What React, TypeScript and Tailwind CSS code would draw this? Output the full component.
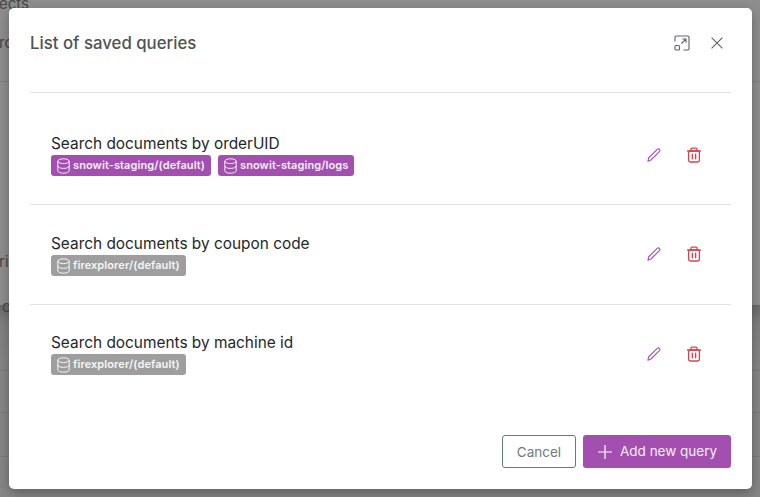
import React from "react";

function Db() {
  return (
    <svg viewBox="0 0 13 16" width="13" height="16" fill="none" stroke="currentColor" strokeWidth="1">
      <ellipse cx="6.5" cy="3.2" rx="5.7" ry="2.4" />
      <path d="M.8 3.2v9.6c0 1.3 2.6 2.4 5.7 2.4s5.7-1.1 5.7-2.4V3.2" />
      <path d="M.8 8c0 1.3 2.6 2.4 5.7 2.4s5.7-1.1 5.7-2.4" />
    </svg>
  );
}

function Pencil() {
  return (
    <svg viewBox="0 0 16 16" width="16" height="16" fill="none" stroke="#a855b8" strokeWidth="1.2" strokeLinejoin="round">
      <path d="M2 14.2l.7-3.4 8.5-8.4c.7-.7 1.7-.7 2.3-.1.6.6.6 1.6-.1 2.3l-8.5 8.4-2.9 1.2z" />
    </svg>
  );
}

function Trash() {
  return (
    <svg viewBox="0 0 16 16" width="16" height="16" fill="none" stroke="#d9434e" strokeWidth="1.3" strokeLinejoin="round" strokeLinecap="round">
      <path d="M1.5 4h13" />
      <path d="M5 4V2.2c0-.6.4-1 1-1h4c.6 0 1 .4 1 1V4" />
      <rect x="2.6" y="4" width="10.8" height="11" rx="1.8" />
      <path d="M6.4 7.2v4.6M9.6 7.2v4.6" strokeWidth="1.4" />
    </svg>
  );
}

function Expand() {
  return (
    <svg viewBox="0 0 16 16" width="16" height="16" fill="none" stroke="#5b6266" strokeWidth="1.1">
      <path d="M1 6.5V2.2C1 1.5 1.5 1 2.2 1h11.6c.7 0 1.2.5 1.2 1.2v11.6c0 .7-.5 1.2-1.2 1.2H9.5" />
      <rect x="1" y="10.5" width="4.5" height="4.5" rx="1" />
      <path d="M7.5 8.5L11.8 4.2M8.3 4h3.7v3.7" />
    </svg>
  );
}

function Close() {
  return (
    <svg viewBox="0 0 12 12" width="12" height="12" fill="none" stroke="#5b6266" strokeWidth="1.1">
      <path d="M.6.6l10.8 10.8M11.4.6L.6 11.4" />
    </svg>
  );
}

function PlusIcon() {
  return (
    <svg viewBox="0 0 14 14" width="14" height="14" fill="none" stroke="#ffffff" strokeWidth="1.2">
      <path d="M7 0v14M0 7h14" />
    </svg>
  );
}

function Tag({ label, color }: { label: string; color: string }) {
  return (
    <span className={`inline-flex h-[21px] items-center gap-[3px] rounded-[3px] px-[6px] text-[11px] font-semibold tracking-[0.1px] text-white/90 ${color}`}>
      <Db />
      {label}
    </span>
  );
}

function Row({
  title,
  tags,
  color,
  border,
  textTop,
  iconTop,
}: {
  title: string;
  tags: string[];
  color: string;
  border: boolean;
  textTop: string;
  iconTop: string;
}) {
  return (
    <div className={`flex h-[100px] items-start justify-between pl-[21px] pr-[29px] ${border ? "border-b border-[#e2e2e2]" : ""}`}>
      <div className={`flex flex-col ${textTop}`}>
        <div className="text-[15.4px] leading-[19px] text-[#23272b]">{title}</div>
        <div className="mt-[2px] flex gap-[7px]">
          {tags.map((t) => (
            <Tag key={t} label={t} color={color} />
          ))}
        </div>
      </div>
      <div className={`flex items-center gap-[24px] ${iconTop}`}>
        <Pencil />
        <Trash />
      </div>
    </div>
  );
}

export default function App() {
  return (
    <div className="relative h-[497px] w-[760px] overflow-hidden bg-[#8e8e8e] font-['Inter',sans-serif]">
      <div className="flex h-full flex-col text-[15px] leading-[18px] text-[#474747]">
        <div className="h-[82px] border-b border-[#828282]">
          <div className="-ml-[1px] -mt-[5px]">ects</div>
          <div className="mt-[21px] -ml-[1px]">rc</div>
        </div>
        <div className="h-[223px] pt-[171px]">
          <div className="-ml-[1px]">ri</div>
        </div>
        <div className="h-[66px] border-b border-[#7c7c7c] bg-gradient-to-b from-[#6a6a6a] via-[#818181] via-30% to-[#868686]">
          <div className="ml-[2px] -mt-[7px]">c</div>
        </div>
        <div className="h-[42px] border-b border-[#7c7c7c] bg-[#868686]" />
        <div className="h-[44px] border-b border-[#7c7c7c] bg-[#868686]" />
        <div className="flex-1 bg-[#868686]" />
      </div>
      <div className="absolute left-[9px] top-[8px] flex h-[481px] w-[743px] flex-col rounded-[5px] bg-white px-[21px] shadow-[0_4px_12px_rgba(0,0,0,0.3)]">
        <div className="flex h-[85px] items-start justify-between border-b border-[#e2e2e2] pt-[25px]">
          <h2 className="text-[16.8px] font-medium leading-[20px] text-[#4f5356]">List of saved queries</h2>
          <div className="mr-[8px] flex items-center gap-[21px] pt-[2px]">
            <Expand />
            <Close />
          </div>
        </div>
        <div className="mt-[12px] flex flex-col">
          <Row
            title="Search documents by orderUID"
            tags={["snowit-staging/(default)", "snowit-staging/logs"]}
            color="bg-[#a24fb0]"
            border
            textTop="pt-[29px]"
            iconTop="pt-[42px]"
          />
          <Row
            title="Search documents by coupon code"
            tags={["firexplorer/(default)"]}
            color="bg-[#9e9e9e]"
            border
            textTop="pt-[29px]"
            iconTop="pt-[41px]"
          />
          <Row
            title="Search documents by machine id"
            tags={["firexplorer/(default)"]}
            color="bg-[#9e9e9e]"
            border={false}
            textTop="pt-[28px]"
            iconTop="pt-[41px]"
          />
        </div>
        <div className="mt-auto mb-[21px] flex justify-end gap-[7px]">
          <button className="h-[33px] w-[74px] rounded-[3px] border border-[#5f7d86] pt-[1px] text-[13.5px] text-[#6a7a80]">Cancel</button>
          <button className="flex h-[33px] w-[148px] items-center gap-[8px] rounded-[3px] bg-[#a24fb0] pl-[15px] text-[13.5px] text-white/90">
            <PlusIcon />
            Add new query
          </button>
        </div>
      </div>
    </div>
  );
}
